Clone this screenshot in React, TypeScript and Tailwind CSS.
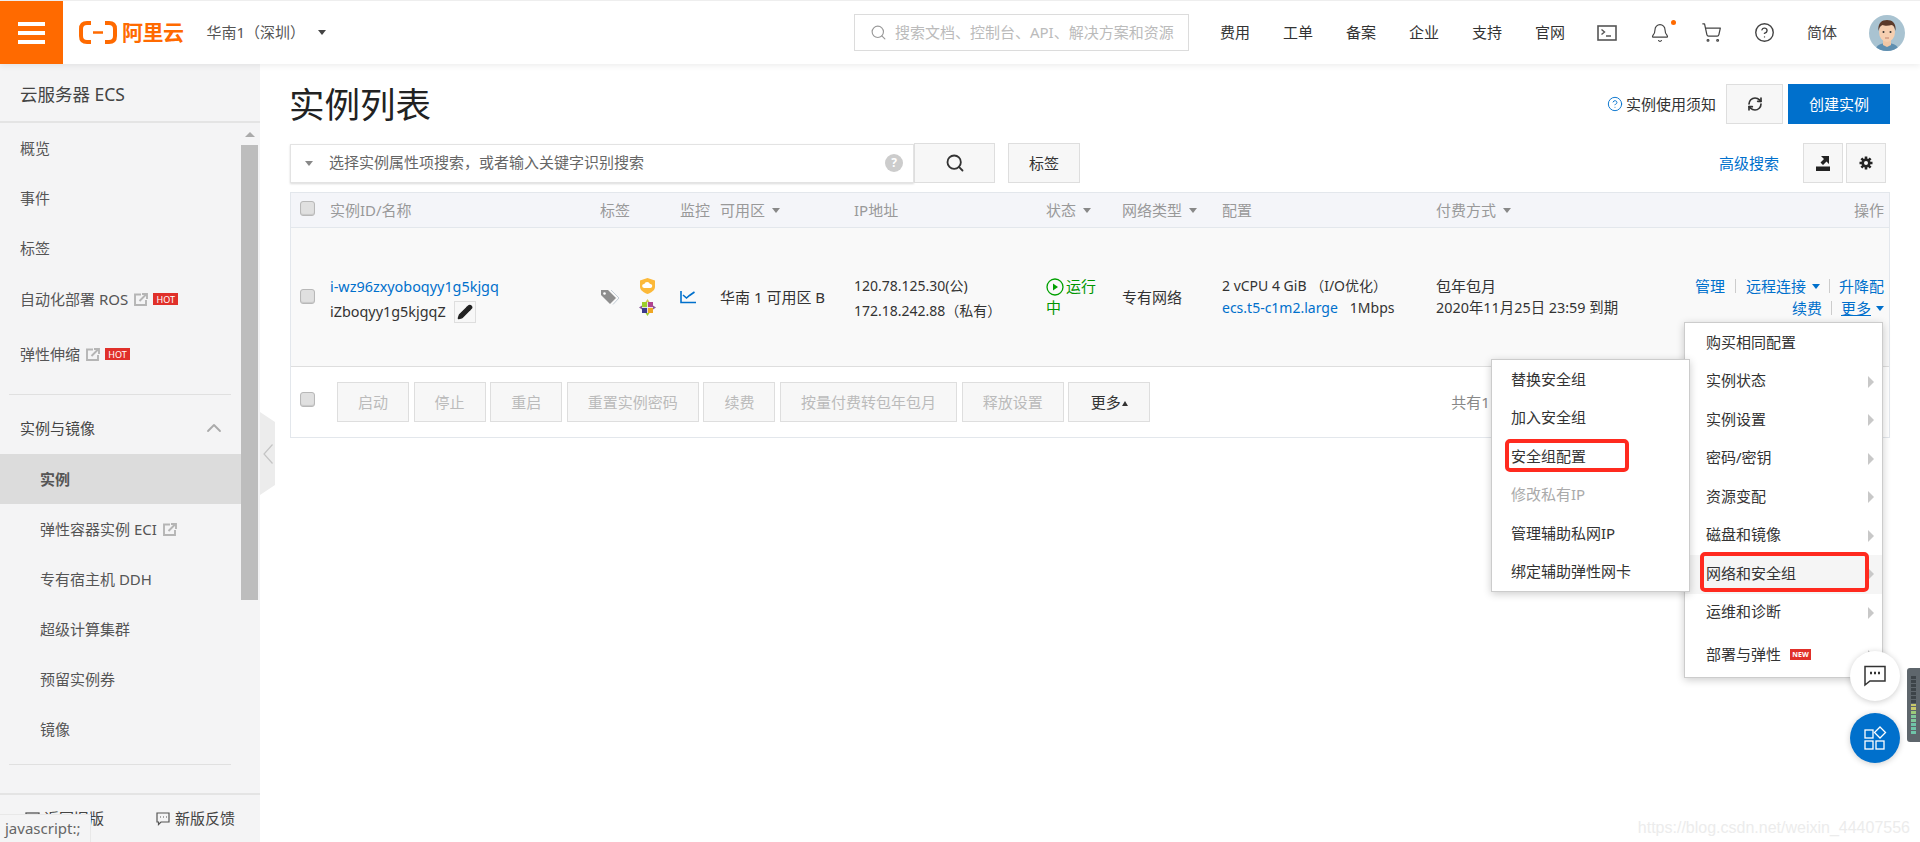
import type { ReactNode } from "react";
import { ChevronUp, RefreshCw, Search, Pencil, HelpCircle, Bell, ShoppingCart } from "lucide-react";

const FONT = "[font-family:'Noto_Sans','Noto_Sans_CJK_SC',sans-serif]";
const COLS = "grid grid-cols-[39px_270px_80px_40px_134px_192px_76px_100px_214px_240px_1fr]";

function Caret({ className = "" }: { className?: string }) {
  return <span className={`inline-block h-0 w-0 border-x-[4px] border-t-[5px] border-x-transparent border-t-[#888] ${className}`} />;
}

function Check({ className = "" }: { className?: string }) {
  return <span className={`block h-[15px] w-[15px] rounded-[3px] border border-[#b8b8b8] bg-[#e0e0e0] shadow-[inset_0_-1px_1px_#c8c8c8] ${className}`} />;
}

function ExtLink() {
  return (
    <svg width="14" height="13" viewBox="0 0 14 13" className="ml-[6px]" fill="none" stroke="#b5b5b5" strokeWidth="1.9">
      <path d="M7 1.500H1v10.500h11V7" />
      <path d="M5.500 8L12 1.500M8 1h5v5" />
    </svg>
  );
}

function Hot() {
  return <span className="ml-[5px] flex h-[12px] w-[25px] items-center justify-center bg-[#e0302a] text-[9px] leading-none text-white">HOT</span>;
}

function NavItem({ children, sub, active }: { children: ReactNode; sub?: boolean; active?: boolean }) {
  return (
    <div className={`flex h-[50px] items-center whitespace-nowrap text-[15px] text-[#555] ${sub ? "pl-[40px]" : "pl-[20px]"} ${active ? "bg-[#dcdcdc] font-bold text-[#333]" : ""}`}>
      {children}
    </div>
  );
}

function Sidebar() {
  return (
    <aside className="flex h-full w-[260px] shrink-0 flex-col bg-[#f4f4f5]">
      <div className="flex h-[59px] shrink-0 items-center border-b-2 border-[#e4e4e4] pl-[20px] pt-[3px] text-[17.500px] text-[#444]">云服务器 ECS</div>
      <div className="flex min-h-0 flex-1">
        <div className="w-[241px] shrink-0">
          <NavItem>概览</NavItem>
          <NavItem>事件</NavItem>
          <NavItem>标签</NavItem>
          <div className="flex h-[52px] items-center whitespace-nowrap pl-[20px] text-[15px] text-[#555]">自动化部署 ROS<ExtLink /><Hot /></div>
          <div className="flex h-[58px] items-center whitespace-nowrap pl-[20px] text-[15px] text-[#555]">弹性伸缩<ExtLink /><Hot /></div>
          <div className="ml-[9px] mr-[10px] mt-[11px] border-t border-[#e0e0e0]" />
          <div className="flex h-[59px] items-center justify-between pl-[20px] pr-[15px] pt-[7px] text-[15px] text-[#444]">
            实例与镜像
            <ChevronUp size={24} strokeWidth={1.800} className="text-[#aaa]" />
          </div>
          <NavItem sub active>实例</NavItem>
          <NavItem sub>弹性容器实例 ECI<ExtLink /></NavItem>
          <NavItem sub>专有宿主机 DDH</NavItem>
          <NavItem sub>超级计算集群</NavItem>
          <NavItem sub>预留实例券</NavItem>
          <NavItem sub>镜像</NavItem>
          <div className="ml-[9px] mr-[10px] mt-[10px] border-t border-[#e0e0e0]" />
        </div>
        <div className="w-[17px] shrink-0">
          <div className="flex h-[22px] items-center justify-center">
            <span className="h-0 w-0 border-x-[5px] border-b-[5px] border-x-transparent border-b-[#aaa]" />
          </div>
          <div className="h-[455px] bg-[#bdbdbd]" />
        </div>
        <div className="w-[2px] shrink-0" />
      </div>
      <div className="flex h-[49px] shrink-0 items-center justify-between border-t-2 border-[#e4e4e4] pl-[25px] pr-[25px] text-[15px] text-[#444]">
        <span className="flex items-center gap-[4px]">
          <svg width="15" height="14" viewBox="0 0 15 14" fill="none" stroke="#555" strokeWidth="1.300"><rect x="1" y="1" width="13" height="12" /></svg>
          返回旧版
        </span>
        <span className="flex items-center gap-[5px]">
          <svg width="14" height="14" viewBox="0 0 14 14" fill="none" stroke="#555" strokeWidth="1.200">
            <path d="M1 1h12v9H5l-2.500 2.500V10H1z" />
            <path d="M4 5h1M7 5h1M10 5h1" />
          </svg>
          新版反馈
        </span>
      </div>
    </aside>
  );
}

function TopBar() {
  const nav = ["费用", "工单", "备案", "企业", "支持", "官网"];
  return (
    <header className="relative z-10 flex h-[64px] shrink-0 items-center border-t border-[#eeeeee] bg-white shadow-[0_2px_6px_rgba(0,0,0,0.07)]">
      <div className="flex h-[63px] w-[63px] shrink-0 flex-col justify-center gap-[5px] bg-[#ff6a00] px-[18px]">
        <span className="h-[4px] bg-white" />
        <span className="h-[4px] bg-white" />
        <span className="h-[4px] bg-white" />
      </div>
      <div className="ml-[16px] flex items-center">
        <svg width="38" height="23" viewBox="0 0 38 23" fill="none" stroke="#ff6a00" strokeWidth="4">
          <path d="M12 2H8Q2 2 2 8V15Q2 21 8 21H12" />
          <path d="M26 2H30Q36 2 36 8V15Q36 21 30 21H26" />
          <path d="M14 11.500H24" strokeWidth="2.500" />
        </svg>
        <span className="ml-[5px] text-[21px] font-bold leading-none tracking-[-0.5px] text-[#ff6a00]">阿里云</span>
      </div>
      <span className="ml-[23px] whitespace-nowrap text-[15px] text-[#555]">华南1（深圳）</span>
      <span className="ml-[13px] h-0 w-0 border-x-[4.500px] border-t-[5px] border-x-transparent border-t-[#444]" />
      <div className="ml-auto flex h-[37px] w-[335px] items-center border border-[#dcdcdc] pl-[15px]">
        <Search size={17} className="text-[#999]" strokeWidth={1.600} />
        <span className="ml-[8px] whitespace-nowrap pb-[1px] text-[15px] text-[#bbb]">搜索文档、控制台、API、解决方案和资源</span>
      </div>
      <div className="ml-[31px] flex items-center gap-[33px] text-[15px] text-[#333]">
        {nav.map((n) => (
          <span key={n} className="whitespace-nowrap">{n}</span>
        ))}
      </div>
      <svg width="20" height="16" viewBox="0 0 20 16" fill="none" stroke="#555" className="ml-[32px]">
        <rect x="1" y="1" width="18" height="14" strokeWidth="1.600" />
        <path d="M4.500 4.500l3 2.500-3 2.500M9 11h5" strokeWidth="1.400" />
      </svg>
      <div className="relative ml-[33px]">
        <Bell size={20} strokeWidth={1.400} className="text-[#444]" />
        <span className="absolute right-[-6px] top-[-3px] h-[5px] w-[5px] rounded-full bg-[#ff6a00]" />
      </div>
      <ShoppingCart size={21} strokeWidth={1.400} className="ml-[31px] text-[#444]" />
      <HelpCircle size={21} strokeWidth={1.600} className="ml-[32px] text-[#444]" />
      <span className="ml-[32px] whitespace-nowrap text-[15px] text-[#444]">简体</span>
      <svg width="36" height="36" viewBox="0 0 36 36" className="ml-[32px] mr-[15px] shrink-0">
        <defs>
          <clipPath id="av"><circle cx="18" cy="18" r="18" /></clipPath>
        </defs>
        <g clipPath="url(#av)">
          <rect width="36" height="36" fill="#a9c3d1" />
          <path d="M6 36c1-6 6-8 12-8s11 2 12 8z" fill="#5f8fb0" />
          <path d="M14 25h8v5l-4 2-4-2z" fill="#f2c7a5" />
          <ellipse cx="18" cy="17" rx="8" ry="10" fill="#f6cfb0" />
          <path d="M9.500 16C8.500 8 13 5 18 5s9.500 3 8.500 11c-1-4-2-6-4-6-3 1-7 1-9 0-2 1-3 2-4 6z" fill="#5b3a2a" />
          <circle cx="14.500" cy="17" r="1" fill="#333" />
          <circle cx="21.500" cy="17" r="1" fill="#333" />
          <path d="M16 23h4" stroke="#b5705a" strokeWidth="0.800" />
        </g>
      </svg>
    </header>
  );
}

function ToolBtn({ children, className = "" }: { children: ReactNode; className?: string }) {
  return <div className={`flex h-10 shrink-0 items-center justify-center whitespace-nowrap border border-[#dedede] bg-[#f7f7f7] text-[15px] text-[#333] ${className}`}>{children}</div>;
}

function Table() {
  const head = "flex items-center gap-[7px] whitespace-nowrap text-[15px] text-[#999]";
  const link = "text-[#0070cc]";
  return (
    <div className="mt-[9px] border border-[#e3e7ec] text-[15px] text-[#333]">
      <div className={`${COLS} h-[35px] items-center border-b border-[#e3e7ec] bg-[#f4f5f9]`}>
        <div className="pl-[9px]"><Check className="mb-[4px]" /></div>
        <div className={head}>实例ID/名称</div>
        <div className={head}>标签</div>
        <div className={head}>监控</div>
        <div className={head}>可用区<Caret /></div>
        <div className={head}>IP地址</div>
        <div className={head}>状态<Caret /></div>
        <div className={head}>网络类型<Caret /></div>
        <div className={head}>配置</div>
        <div className={head}>付费方式<Caret /></div>
        <div className={`${head} justify-end pr-[5px]`}>操作</div>
      </div>
      <div className={`${COLS} h-[138px] items-center bg-[#f9f9f9]`}>
        <div className="pl-[9px]"><Check className="mb-[2px]" /></div>
        <div className="whitespace-nowrap pt-[4px] text-[14.400px]">
          <div className={`leading-[22px] ${link}`}>i-wz96zxyoboqyy1g5kjgq</div>
          <div className="mt-[3px] flex h-[22px] items-center">
            iZboqyy1g5kjgqZ
            <span className="ml-[8px] flex h-[22px] w-[22px] items-center justify-center border border-[#dedede] bg-[#f7f7f7]">
              <Pencil size={16} fill="#222" stroke="#222" />
            </span>
          </div>
        </div>
        <div className="flex items-center gap-[19px]">
          <svg width="20" height="18" viewBox="0 0 20 18">
            <path d="M1 2h7l8 8-6 6-9-9z" fill="#8e8e8e" />
            <circle cx="4.500" cy="5.500" r="1.300" fill="#fff" />
            <path d="M11 2l8 8-6 6.500" fill="none" stroke="#c3cdd6" strokeWidth="1" />
          </svg>
          <div className="flex flex-col items-center gap-[5px]">
            <svg width="15" height="16" viewBox="0 0 15 16">
              <path d="M7.500 0L15 2.500V9c0 3-3.500 5.500-7.500 7C3.500 14.500 0 12 0 9V2.500z" fill="#fcb939" />
              <path d="M4 10a2 2 0 01.300-4 3 3 0 015.700 0 2 2 0 01.500 4z" fill="#fff" />
            </svg>
            <svg width="17" height="17" viewBox="0 0 17 17">
              <path d="M8.500 0l2 3h-4z" fill="#d6c94f" />
              <path d="M3 3h5.100v5.100H3z" fill="#9ccd2a" />
              <path d="M8.900 3H14v5.100H8.900z" fill="#b0438f" />
              <path d="M3 8.900h5.100V14H3z" fill="#3d3a8c" />
              <path d="M8.900 8.900H14V14H8.900z" fill="#efa724" />
              <path d="M0 8.500l3-2v4zM17 8.500l-3-2v4z" fill="#8a5a9a" />
              <path d="M8.500 17l-2-3h4z" fill="#9ccd2a" />
            </svg>
          </div>
        </div>
        <div>
          <svg width="16" height="13" viewBox="0 0 16 13" fill="none" stroke="#0070cc" strokeWidth="1.600">
            <path d="M1 0v11.500h15" />
            <path d="M3 4l3.500 3 3-2.500 5-3.500" />
          </svg>
        </div>
        <div className="whitespace-nowrap">华南 1 可用区 B</div>
        <div className="whitespace-nowrap pt-[2px] text-[14px] leading-[25px]">
          <div>120.78.125.30(公)</div>
          <div>172.18.242.88（私有）</div>
        </div>
        <div className="w-[58px] leading-[21px] text-[#009600]">
          <span className="flex items-center whitespace-nowrap">
            <svg width="18" height="18" viewBox="0 0 18 18" fill="none" className="mr-[2px] shrink-0">
              <circle cx="9" cy="9" r="8" stroke="#00a000" strokeWidth="1.300" />
              <path d="M7 5.500L12 9l-5 3.500z" fill="#00a000" />
            </svg>
            运行
          </span>
          <span>中</span>
        </div>
        <div className="whitespace-nowrap">专有网络</div>
        <div className="whitespace-nowrap text-[14px] leading-[22px]">
          <div>2 vCPU 4 GiB （I/O优化）</div>
          <div><span className={link}>ecs.t5-c1m2.large</span><span className="ml-[12px]">1Mbps</span></div>
        </div>
        <div className="whitespace-nowrap leading-[22px]">
          <div>包年包月</div>
          <div className="text-[14.400px]">2020年11月25日 23:59 到期</div>
        </div>
        <div className={`whitespace-nowrap pr-[5px] text-right leading-[22px] ${link}`}>
          <div className="flex items-center justify-end">
            管理<i className="mx-[10px] h-[14px] border-l border-[#ccc]" />远程连接<Caret className="ml-[6px] !border-t-[#0070cc]" /><i className="mx-[9px] h-[14px] border-l border-[#ccc]" />升降配
          </div>
          <div className="flex items-center justify-end">
            续费<i className="mx-[9px] h-[14px] border-l border-[#ccc]" /><span className="underline">更多</span><Caret className="ml-[5px] !border-t-[#0070cc]" />
          </div>
        </div>
      </div>
      <div className="flex h-[71px] items-center border-t border-[#dedede] bg-white pl-[9px]">
        <Check className="mb-[6px]" />
        <div className="ml-[22px] flex items-center gap-[4.600px]">
          {["启动", "停止", "重启", "重置实例密码", "续费", "按量付费转包年包月", "释放设置"].map((b) => (
            <ToolBtn key={b} className="px-[20px] !text-[#bbb]">{b}</ToolBtn>
          ))}
          <ToolBtn className="w-[82px]">更多<span className="ml-[1px] mt-[2px] h-0 w-0 border-x-[3.500px] border-b-[5px] border-x-transparent border-b-[#333]" /></ToolBtn>
        </div>
        <span className="ml-[301px] whitespace-nowrap text-[#888]">共有1</span>
      </div>
    </div>
  );
}

function MenuItem({ children, arrow = true, className = "" }: { children: ReactNode; arrow?: boolean; className?: string }) {
  return (
    <div className={`relative flex h-[38.500px] items-center justify-between pb-[3px] pl-[21px] pr-[8px] text-[15px] text-[#333] ${className}`}>
      <span className="flex items-center whitespace-nowrap">{children}</span>
      {arrow && <span className="mt-[3px] h-0 w-0 border-y-[6px] border-l-[6px] border-y-transparent border-l-[#c8c8c8]" />}
    </div>
  );
}

function Menus() {
  const sub = ["替换安全组", "加入安全组", "安全组配置", "修改私有IP", "管理辅助私网IP", "绑定辅助弹性网卡"];
  const main = ["实例状态", "实例设置", "密码/密钥", "资源变配", "磁盘和镜像"];
  return (
    <>
      <div className="absolute left-[1684px] top-[322px] z-20 w-[199px] border border-[#ccc] bg-white pt-[1px] shadow-[0_2px_8px_rgba(0,0,0,0.2)]">
        <MenuItem arrow={false}>购买相同配置</MenuItem>
        {main.map((m) => (
          <MenuItem key={m}>{m}</MenuItem>
        ))}
        <MenuItem className="bg-[#f5f5f5]">
          网络和安全组
          <span className="absolute left-[15px] top-[-3px] h-[40px] w-[169px] rounded-[5px] border-[4px] border-[#ff2a1f]" />
        </MenuItem>
        <MenuItem>运维和诊断</MenuItem>
        <MenuItem className="!h-[45px] !pb-[1px]">
          部署与弹性
          <span className="ml-[9px] flex h-[11px] w-[21px] items-center justify-center bg-[#e0302a] text-[7px] font-bold leading-none text-white">NEW</span>
        </MenuItem>
      </div>
      <div className="absolute left-[1491px] top-[359px] z-30 w-[199px] border border-[#ccc] bg-white shadow-[0_2px_8px_rgba(0,0,0,0.2)]">
        {sub.map((s) => (
          <MenuItem key={s} arrow={false} className={`!pb-[1px] !pl-[19px] ${s === "修改私有IP" ? "!text-[#aaa]" : ""}`}>
            {s}
            {s === "安全组配置" && <span className="absolute left-[13px] top-[2px] h-[33px] w-[124px] rounded-[5px] border-[4px] border-[#ff2a1f]" />}
          </MenuItem>
        ))}
      </div>
    </>
  );
}

function Floaters() {
  return (
    <>
      <div className="absolute left-[1850px] top-[651px] z-40 flex h-[50px] w-[50px] items-center justify-center rounded-full bg-white shadow-[0_1px_6px_rgba(0,0,0,0.2)]">
        <svg width="22" height="22" viewBox="0 0 22 22" fill="none" stroke="#333" strokeWidth="1.500">
          <path d="M1 1.500h20V16H6l-5 4z" />
          <path d="M6 8h2M10 8h2M14 8h2" strokeWidth="2.500" />
        </svg>
      </div>
      <div className="absolute left-[1850px] top-[713px] z-40 flex h-[50px] w-[50px] items-center justify-center rounded-full bg-[#0070cc] shadow-[0_1px_6px_rgba(0,0,0,0.2)]">
        <svg width="24" height="24" viewBox="0 0 24 24" fill="none" stroke="#fff" strokeWidth="1.300">
          <rect x="2" y="4" width="8" height="8" />
          <rect x="2" y="15" width="8" height="8" />
          <rect x="13" y="15" width="8" height="8" />
          <path d="M17 1l5.500 5.500L17 12l-5.500-5.500z" />
        </svg>
      </div>
      <div className="absolute left-[1907px] top-[668px] z-40 flex h-[74px] w-[13px] flex-col items-center justify-end gap-[1px] rounded-l-[3px] bg-[#5e666c] pb-[8px] pt-[8px]">
        {["#3d4449", "#3d4449", "#3d4449", "#3d4449", "#3d4449", "#3d4449", "#3d4449", "#c9c96a", "#c9c96a", "#9ccb7a", "#7fc89a", "#7fc89a", "#6fc4a8", "#6fc4a8", "#6fc4a8"].map((c, i) => (
          <span key={i} className="h-[3px] w-[5px]" style={{ background: c }} />
        ))}
      </div>
    </>
  );
}

export default function App() {
  return (
    <div className={`relative flex h-[842px] w-[1920px] flex-col overflow-hidden bg-white ${FONT}`}>
      <TopBar />
      <div className="flex min-h-0 flex-1">
        <Sidebar />
        <div className="flex items-start">
          <div className="mt-[348px] flex h-[83px] w-[15px] items-center justify-center bg-[#ececec] [clip-path:polygon(0_0,100%_12%,100%_88%,0_100%)]">
            <svg width="10" height="20" viewBox="0 0 10 20" fill="none" stroke="#c4c4c4" strokeWidth="1.200">
              <path d="M9.500 0.500L1 10l8.500 9.500" />
            </svg>
          </div>
        </div>
        <main className="ml-[15px] mr-[30px] min-w-0 flex-1">
          <div className="mt-[20px] flex h-10 items-center">
            <h1 className="-ml-px mt-[2px] text-[35.500px] font-normal leading-none text-[#222]">实例列表</h1>
            <span className="ml-auto flex items-center whitespace-nowrap text-[15px] text-[#333]">
              <HelpCircle size={16} strokeWidth={1.400} className="mr-[3px] text-[#0070cc]" />实例使用须知
            </span>
            <ToolBtn className="ml-[10px] w-[57px]"><RefreshCw size={16} strokeWidth={2.500} /></ToolBtn>
            <div className="ml-[5px] flex h-10 w-[102px] items-center justify-center bg-[#0070cc] text-[15px] text-white">创建实例</div>
          </div>
          <div className="mt-[19px] flex h-10 items-center">
            <div className="flex h-[39px] w-[624px] items-center border border-[#e3e3e3] bg-white pl-[14px] pr-[10px] shadow-[0_1px_2px_rgba(0,0,0,0.15)]">
              <Caret />
              <span className="ml-[16px] whitespace-nowrap pb-[2px] text-[15px] text-[#666]">选择实例属性项搜索，或者输入关键字识别搜索</span>
              <span className="ml-auto flex h-[18px] w-[18px] items-center justify-center rounded-full bg-[#ccc] text-[12px] font-bold leading-none text-white">?</span>
            </div>
            <ToolBtn className="w-[81px]"><Search size={20} strokeWidth={2.200} /></ToolBtn>
            <ToolBtn className="ml-[13px] w-[72px]">标签</ToolBtn>
            <span className="ml-auto whitespace-nowrap text-[15px] text-[#0070cc]">高级搜索</span>
            <ToolBtn className="ml-[24px] w-10">
              <svg width="16" height="16" viewBox="0 0 16 16" fill="#222">
                <rect x="1" y="11.500" width="14" height="4.500" />
                <path d="M6 1h8v8l-2.500-2.500L8 10 5.500 7.500 9 4z" />
              </svg>
            </ToolBtn>
            <ToolBtn className="ml-[3px] mr-[4px] w-10">
              <svg width="16" height="16" viewBox="0 0 16 16">
                <path d="M8 1.500v13M1.500 8h13M3.400 3.400l9.200 9.200M12.600 3.400l-9.200 9.200" stroke="#222" strokeWidth="2.600" />
                <circle cx="8" cy="8" r="4.600" fill="#222" />
                <circle cx="8" cy="8" r="2" fill="#f7f7f7" />
              </svg>
            </ToolBtn>
          </div>
          <div className="mt-[1px]"><Table /></div>
        </main>
      </div>
      <Menus />
      <Floaters />
      <div className="absolute bottom-[2px] right-[10px] text-[16px] text-[#ececec] [font-family:'Liberation_Sans',sans-serif]">https://blog.csdn.net/weixin_44407556</div>
      <div className="absolute bottom-0 left-0 z-50 flex h-[28px] w-[91px] items-center border-r border-t border-[#e8e8e8] bg-[#f4f4f5] pl-[5px] text-[15px] text-[#666]">javascript:;</div>
    </div>
  );
}
